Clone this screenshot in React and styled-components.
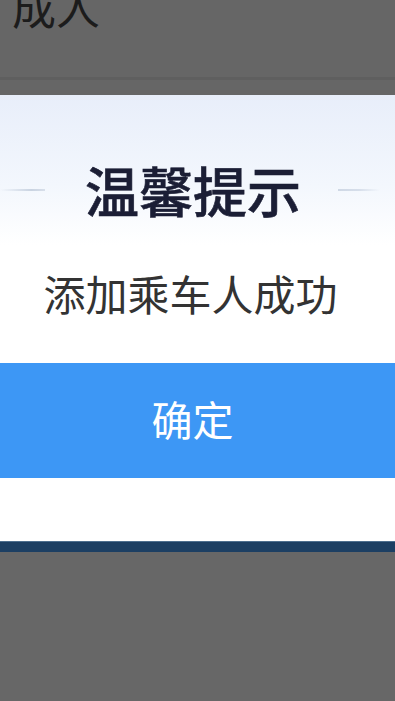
import styled, { createGlobalStyle } from "styled-components";

const GlobalStyle = createGlobalStyle`
  html, body {
    margin: 0;
    padding: 0;
    background: #666666;
    font-family: "Noto Sans CJK SC", "Noto Sans", sans-serif;
  }
`;

const Page = styled.div`
  width: 395px;
  height: 701px;
  overflow: hidden;
  display: flex;
  flex-direction: column;
  background: #666666;
`;

const TopBar = styled.div`
  height: 95px;
  flex-shrink: 0;
  overflow: hidden;
  padding-left: 12px;
  box-sizing: border-box;
  background: linear-gradient(
    to bottom,
    #666666 0,
    #666666 77px,
    #5f5f5f 77px,
    #5f5f5f 80px,
    #666666 80px
  );
`;

const PassengerType = styled.div`
  margin-top: -16px;
  font-size: 44px;
  line-height: 44px;
  color: #1c1c1c;
`;

const Dialog = styled.div`
  height: 446px;
  flex-shrink: 0;
  display: flex;
  flex-direction: column;
  background: linear-gradient(to bottom, #e8eefa 0, #f3f7fd 90px, #ffffff 150px);
`;

const TitleRow = styled.div`
  display: flex;
  align-items: center;
  padding-top: 68px;
`;

const Line = styled.div`
  height: 2px;
  width: ${(p) => p.$w}px;
  margin-left: ${(p) => p.$ml || 0}px;
  margin-right: ${(p) => p.$mr || 0}px;
  background: ${(p) =>
    p.$side === "left"
      ? "linear-gradient(to right, rgba(200,210,225,0) 0%, #c9d3e1 70%, #d8dfea 100%)"
      : "linear-gradient(to right, #cfd8e5 0%, #d6deea 50%, rgba(210,220,232,0) 100%)"};
`;

const Title = styled.h1`
  margin: 0;
  font-size: 54px;
  line-height: 54px;
  font-weight: 500;
  color: #1b1e35;
  white-space: nowrap;
  -webkit-text-stroke: 0.6px #1b1e35;
`;

const Message = styled.p`
  margin: 55px 0 0;
  padding-right: 14px;
  text-align: center;
  font-size: 42px;
  line-height: 42px;
  color: #333333;
`;

const ConfirmButton = styled.button`
  margin-top: 49px;
  height: 115px;
  width: 100%;
  border: none;
  padding: 0 10px 4px 0;
  background: #3d97f5;
  color: #ffffff;
  font-family: inherit;
  font-size: 41px;
  line-height: 41px;
  display: flex;
  align-items: center;
  justify-content: center;
  cursor: pointer;
`;

const BottomBand = styled.div`
  height: 11px;
  flex-shrink: 0;
  background: #1c3f63;
  border-top: 1px solid #4d6f8f;
  box-sizing: border-box;
`;

const Backdrop = styled.div`
  flex: 1;
  background: #676767;
`;

export default function App() {
  return (
    <>
      <GlobalStyle />
      <Page>
        <TopBar>
          <PassengerType>成人</PassengerType>
        </TopBar>
        <Dialog>
          <TitleRow>
            <Line $side="left" $w={45} $mr={40} />
            <Title>温馨提示</Title>
            <Line $side="right" $w={42} $ml={37} />
          </TitleRow>
          <Message>添加乘车人成功</Message>
          <ConfirmButton>确定</ConfirmButton>
        </Dialog>
        <BottomBand />
        <Backdrop />
      </Page>
    </>
  );
}
